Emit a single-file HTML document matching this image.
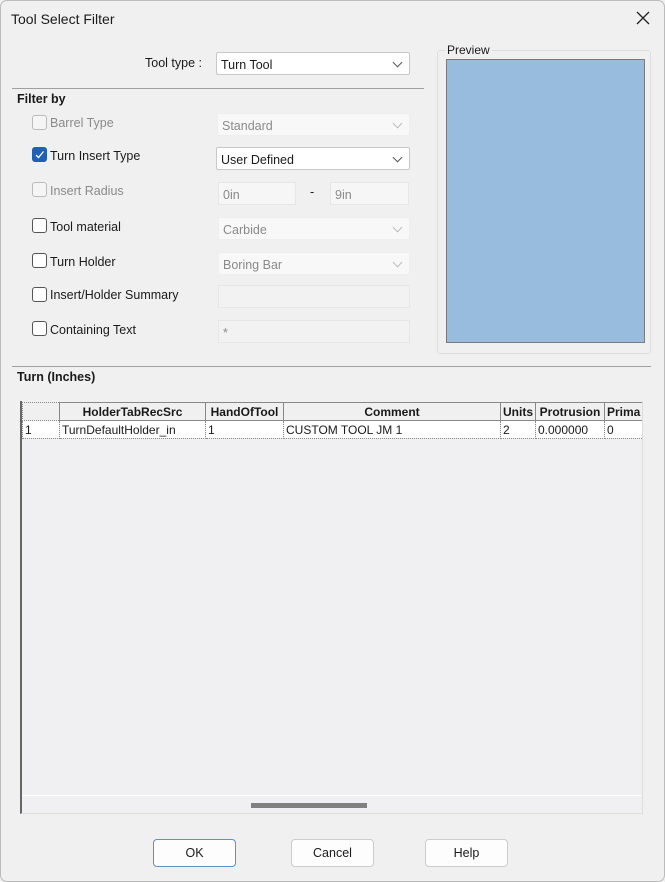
<!DOCTYPE html>
<html><head><meta charset="utf-8"><style>
*{box-sizing:border-box;margin:0;padding:0}
body{width:665px;height:882px;background:#f0f0f0;font-family:"Liberation Sans",sans-serif;font-size:12.5px;color:#1a1a1a;position:relative;overflow:hidden}
.a{position:absolute}
.cb{position:absolute;width:15px;height:15px;border:1px solid #555;border-radius:3px;background:#fff}
.cb.d{border-color:#bbb;background:#f5f5f5}
.lbl{position:absolute;font-size:12.5px}
.dis{color:#8a8a8a}
.combo{position:absolute;height:23px;border:1px solid #c8c8c8;border-radius:2px;background:#fff;padding:5px 4px;font-size:12.5px}
.combo.d{background:#f8f8f8;border-color:#eee;color:#8a8a8a}
.chev{position:absolute;right:8px;top:6px;width:7px;height:7px;border-right:1px solid #555;border-bottom:1px solid #555;transform:rotate(45deg)}
.combo.d .chev{border-color:#bbb}
.fld{position:absolute;height:23px;background:#f6f6f6;border:1px solid #e6e6e6;color:#8a8a8a;padding:5px 4px}
table{border-collapse:collapse;font-size:12px}
td,th{border:1px solid #888;height:18px;padding:0 2px;white-space:nowrap;overflow:hidden}
th{font-weight:bold;text-align:center;background:#f0f0f0}
td{background:#fff;border-style:dotted}
.btn{position:absolute;top:839px;width:83px;height:28px;border:1px solid #ccc;border-radius:4px;background:#fdfdfd;text-align:center;line-height:26px;font-size:12.5px}
</style></head><body>
<div class="a" style="left:0;top:0;width:665px;height:882px;border:1px solid #bbb;border-radius:7px"></div>
<div class="a" style="left:11px;top:11px;font-size:14px">Tool Select Filter</div>
<svg class="a" style="left:636px;top:11px" width="14" height="14"><path d="M1 1L13 13M13 1L1 13" stroke="#222" stroke-width="1.3"/></svg>

<div class="lbl" style="left:145px;top:56px">Tool type :</div>
<div class="combo" style="left:216px;top:52px;width:194px">Turn Tool<div class="chev"></div></div>
<div class="a" style="left:12px;top:88px;width:412px;height:1px;background:#a0a0a0"></div>
<div class="lbl" style="left:17px;top:92px;font-weight:bold">Filter by</div>

<div class="cb d" style="left:32px;top:115px"></div><div class="lbl dis" style="left:50px;top:116px">Barrel Type</div>
<div class="combo d" style="left:217px;top:113px;width:193px">Standard<div class="chev"></div></div>

<div class="cb" style="left:32px;top:147px;background:#1f5fb4;border-color:#1f5fb4"><svg width="13" height="13" style="position:absolute;left:0;top:0"><path d="M3 7L5.5 9.5L10.5 3.5" stroke="#fff" stroke-width="1.3" fill="none"/></svg></div>
<div class="lbl" style="left:50px;top:149px">Turn Insert Type</div>
<div class="combo" style="left:216px;top:147px;width:194px">User Defined<div class="chev"></div></div>

<div class="cb d" style="left:32px;top:182px"></div><div class="lbl dis" style="left:50px;top:184px">Insert Radius</div>
<div class="fld" style="left:218px;top:182px;width:78px">0in</div>
<div class="lbl" style="left:310px;top:185px">-</div>
<div class="fld" style="left:330px;top:182px;width:79px">9in</div>

<div class="cb" style="left:32px;top:218px"></div><div class="lbl" style="left:50px;top:220px">Tool material</div>
<div class="combo d" style="left:218px;top:217px;width:192px">Carbide<div class="chev"></div></div>
<div class="cb" style="left:32px;top:253px"></div><div class="lbl" style="left:50px;top:255px">Turn Holder</div>
<div class="combo d" style="left:218px;top:252px;width:192px">Boring Bar<div class="chev"></div></div>
<div class="cb" style="left:32px;top:287px"></div><div class="lbl" style="left:50px;top:288px">Insert/Holder Summary</div>
<div class="fld" style="left:218px;top:285px;width:192px;background:#f2f2f2"></div>
<div class="cb" style="left:32px;top:321px"></div><div class="lbl" style="left:50px;top:323px">Containing Text</div>
<div class="fld" style="left:218px;top:320px;width:192px;background:#f2f2f2">*</div>

<div class="a" style="left:437px;top:50px;width:214px;height:304px;border:1px solid #ddd;border-radius:3px"></div>
<div class="a" style="left:445px;top:43px;background:#f0f0f0;padding:0 2px;font-size:12px">Preview</div>
<div class="a" style="left:446px;top:59px;width:199px;height:284px;background:#97bcdd;border:1px solid #7a7a7a"></div>

<div class="a" style="left:12px;top:366px;width:639px;height:1px;background:#a0a0a0"></div>
<div class="lbl" style="left:17px;top:370px;font-weight:bold">Turn (Inches)</div>

<div class="a" style="left:20px;top:401px;width:623px;height:413px;background:#f0eff1;border-left:2px solid #666;border-right:1px solid #ddd;border-bottom:1px solid #ddd;overflow:hidden">
<table style="margin-top:1px;table-layout:fixed;width:639px">
<colgroup><col style="width:37px"><col style="width:146px"><col style="width:78px"><col style="width:217px"><col style="width:35px"><col style="width:69px"><col style="width:57px"></colgroup>
<tr><th style="border-style:dotted"></th><th>HolderTabRecSrc</th><th>HandOfTool</th><th>Comment</th><th>Units</th><th>Protrusion</th><th style="text-align:left">Prima</th></tr>
<tr><td>1</td><td>TurnDefaultHolder_in</td><td>1</td><td>CUSTOM TOOL JM 1</td><td>2</td><td>0.000000</td><td>0</td></tr>
</table>
<div class="a" style="left:0;top:394px;width:622px;height:1px;background:#fff"></div>
<div class="a" style="left:229px;top:402px;width:116px;height:5px;background:#808080"></div>
</div>

<div class="btn" style="left:153px;border:1px solid #5a93c8">OK</div>
<div class="btn" style="left:291px">Cancel</div>
<div class="btn" style="left:425px">Help</div>
</body></html>
